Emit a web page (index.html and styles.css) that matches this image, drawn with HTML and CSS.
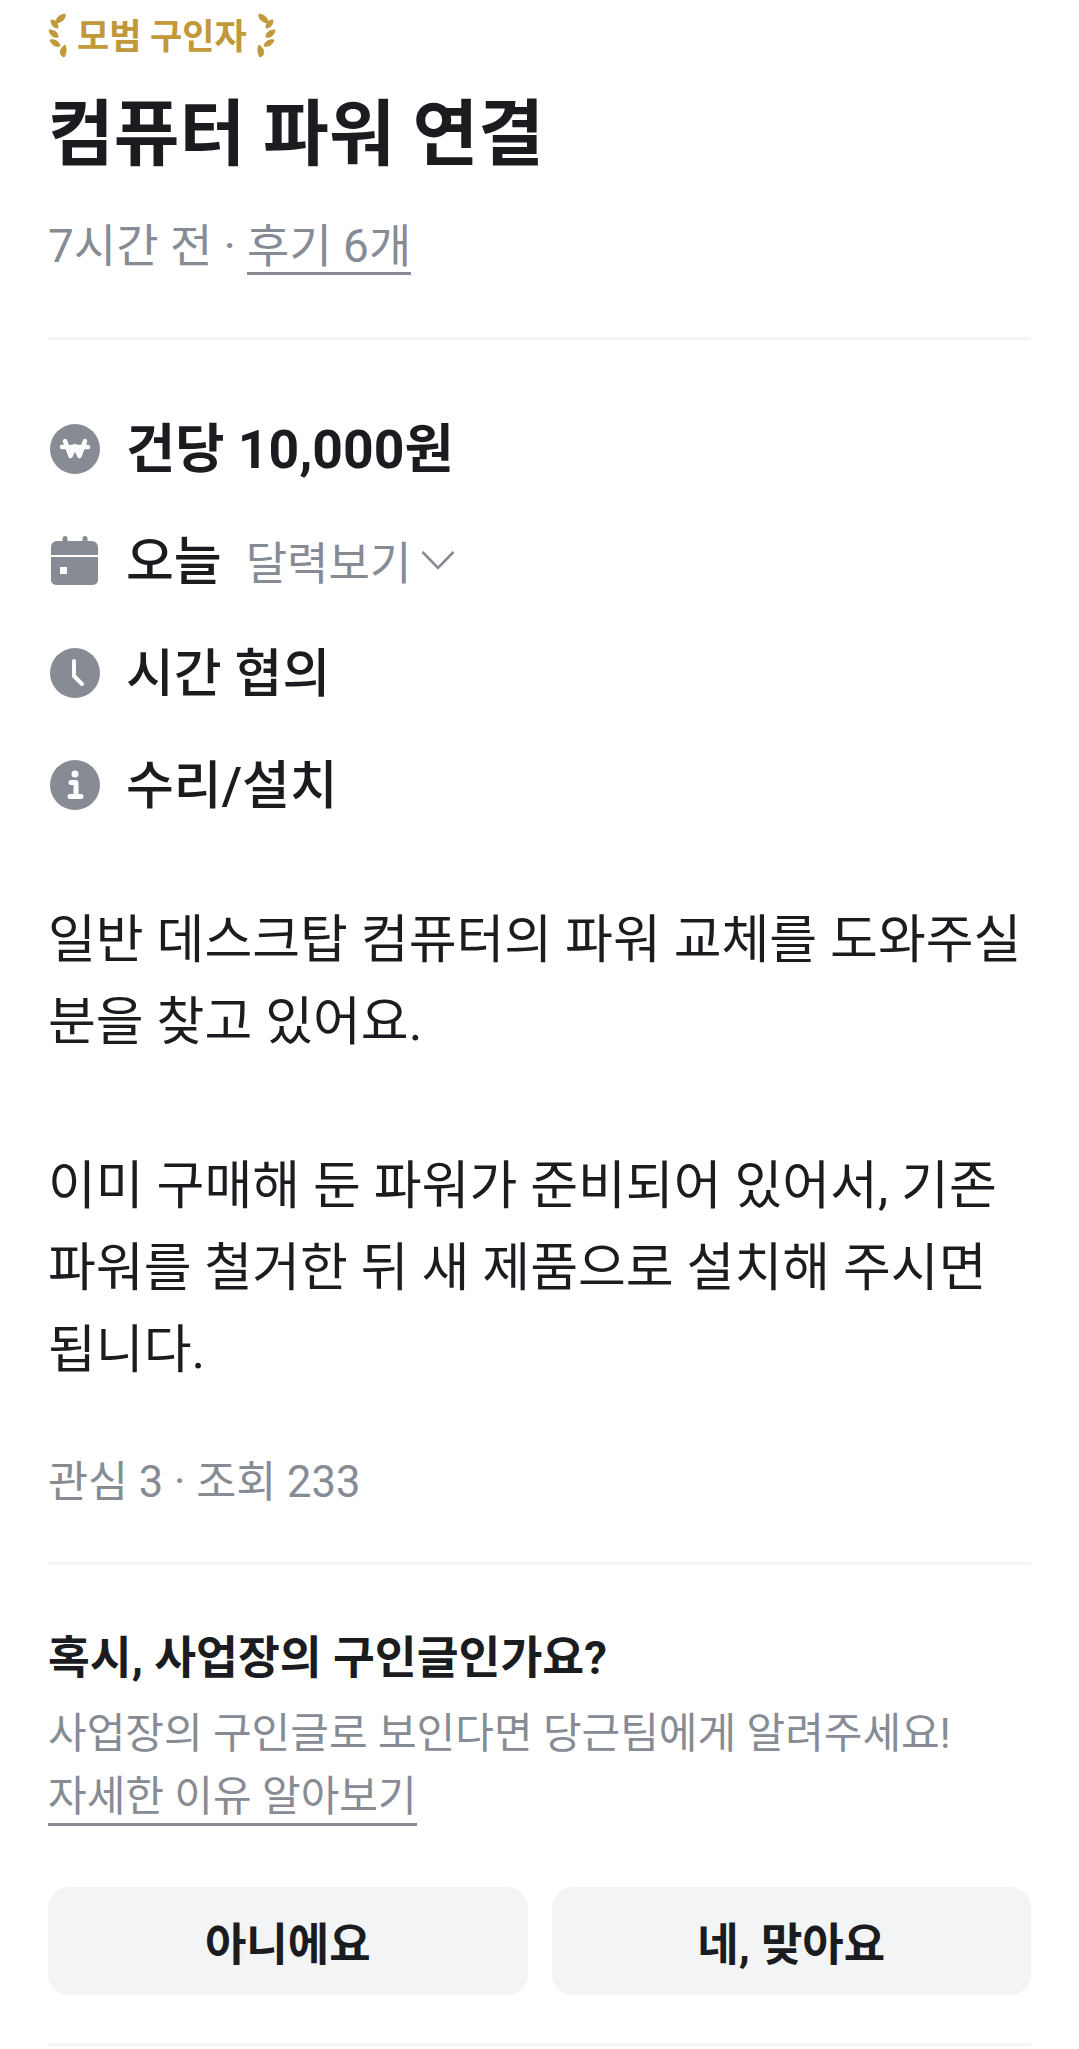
FILE: index.html
```html
<!DOCTYPE html>
<html lang="ko">
<head>
<meta charset="utf-8">
<title>컴퓨터 파워 연결</title>
<link rel="stylesheet" href="styles.css">
</head>
<body>
<main class="page">
  <header class="head">
    <div class="badge">
      <svg class="laurel" viewBox="0 0 20 45"><g fill="#c1983a" stroke="#c1983a" stroke-width="1"><path d="M17 1C18 5 15 9 8 10 8 5 11 2 17 1z"/><path d="M3 7C8 7 10 10 10 15 5 15 3 11 3 7z"/><path d="M1 17C6 17 10 19 10 24 5 25 2 22 1 17z"/><path d="M2 27C6 26 11 28 12 33 7 34 4 32 2 27z"/><path d="M17 32C19 37 18 41 16 44 10 42 12 35 17 32z"/></g></svg>
      <span class="badge-text">모범 구인자</span>
      <svg class="laurel flip" viewBox="0 0 20 45"><g fill="#c1983a" stroke="#c1983a" stroke-width="1"><path d="M17 1C18 5 15 9 8 10 8 5 11 2 17 1z"/><path d="M3 7C8 7 10 10 10 15 5 15 3 11 3 7z"/><path d="M1 17C6 17 10 19 10 24 5 25 2 22 1 17z"/><path d="M2 27C6 26 11 28 12 33 7 34 4 32 2 27z"/><path d="M17 32C19 37 18 41 16 44 10 42 12 35 17 32z"/></g></svg>
    </div>
    <h1 class="title">컴퓨터 파워 연결</h1>
    <p class="meta">7시간 전 · <span class="link">후기 6개</span></p>
  </header>

  <ul class="facts">
    <li class="fact strong">
      <svg class="icon" viewBox="0 0 50 50"><circle cx="25" cy="25" r="25" fill="#868b94"/><path d="M12 23h26M15 17l5.500 15L25 22l4.500 10L35 17" fill="none" stroke="#fff" stroke-width="4.500" stroke-linecap="round" stroke-linejoin="round"/></svg>
      <span class="fact-text">건당 10,000원</span>
    </li>
    <li class="fact">
      <svg class="icon" viewBox="0 0 50 50"><path d="M15 0a2.500 2.500 0 0 1 2.500 2.500V5h15V2.500a2.500 2.500 0 0 1 5 0V5H42a6 6 0 0 1 6 6v8H1v-8a6 6 0 0 1 6-6h5.500V2.500A2.500 2.500 0 0 1 15 0z" fill="#868b94"/><path fill-rule="evenodd" d="M1 21h47v23a5 5 0 0 1-5 5H6a5 5 0 0 1-5-5zm9 10v7h7v-7z" fill="#868b94"/></svg>
      <span class="fact-text">오늘</span>
      <span class="cal">달력보기</span>
      <svg class="chev" viewBox="0 0 34 20"><path d="M1.500 2L17 18 32.500 2" fill="none" stroke="#868b94" stroke-width="2.600"/></svg>
    </li>
    <li class="fact">
      <svg class="icon" viewBox="0 0 50 50"><circle cx="25" cy="25" r="25" fill="#868b94"/><path d="M24 13v15l8 8" fill="none" stroke="#fff" stroke-width="4" stroke-linecap="round" stroke-linejoin="round"/></svg>
      <span class="fact-text">시간 협의</span>
    </li>
    <li class="fact">
      <svg class="icon" viewBox="0 0 50 50"><circle cx="25" cy="25" r="25" fill="#868b94"/><circle cx="25" cy="14" r="3.500" fill="#fff"/><path d="M21 22.500h5V36M20 36.500h11" fill="none" stroke="#fff" stroke-width="5" stroke-linecap="round" stroke-linejoin="round"/></svg>
      <span class="fact-text">수리/설치</span>
    </li>
  </ul>

  <section class="body">
    <p>일반 데스크탑 컴퓨터의 파워 교체를 도와주실<br>분을 찾고 있어요.</p>
    <p class="gap">이미 구매해 둔 파워가 준비되어 있어서, 기존<br>파워를 철거한 뒤 새 제품으로 설치해 주시면<br>됩니다.</p>
  </section>

  <p class="stats">관심 3 · 조회 233</p>

  <section class="check">
    <h2 class="check-title">혹시, 사업장의 구인글인가요?</h2>
    <p class="check-text first">사업장의 구인글로 보인다면 당근팀에게 알려주세요!</p>
    <p class="check-text second"><span class="link">자세한 이유 알아보기</span></p>
    <div class="actions">
      <button class="btn">아니에요</button>
      <button class="btn">네, 맞아요</button>
    </div>
  </section>
</main>
</body>
</html>
```

FILE: styles.css
```css
* { box-sizing: border-box; }
html, body { margin: 0; padding: 0; background: #fff; }
body {
  font-family: Roboto, "Noto Sans CJK KR", sans-serif;
  color: #1a1c20;
  width: 1079px;
  height: 2049px;
  overflow: hidden;
}
.page { padding: 0 48px; }
.head { border-bottom: 3px solid #f3f4f5; height: 340px; padding-top: 13px; }
.badge {
  display: flex;
  align-items: center;
  gap: 9px;
  height: 45px;
  color: #c1983a;
  font-size: 35px;
  font-weight: 700;
}
.badge-text { padding-bottom: 4px; }
.laurel { width: 20px; height: 45px; flex: none; }
.flip { transform: scaleX(-1); }
.title {
  margin: 33px 0 0;
  font-size: 71.500px;
  line-height: 88px;
  font-weight: 700;
}
.meta {
  margin: 37px 0 0;
  font-size: 46px;
  line-height: 60px;
  color: #868b94;
}
.link {
  border-bottom: 3px solid #868b94;
  display: inline-block;
  line-height: 52px;
}
.facts { list-style: none; margin: 52px 0 0; padding: 0; }
.fact {
  display: flex;
  align-items: center;
  height: 112px;
  font-size: 52px;
  font-weight: 500;
}
.fact-text { padding-bottom: 5px; }
.fact.strong { font-weight: 700; font-size: 53.500px; }
.fact.strong .fact-text { padding-bottom: 8px; }
.icon { width: 50px; height: 50px; margin: 2px 26px 0 2px; flex: none; }
.cal { margin-left: 24px; font-size: 45px; font-weight: 400; color: #868b94; }
.chev { width: 34px; height: 20px; margin-left: 10px; }
.body { margin-top: 60px; font-size: 52px; line-height: 82px; }
.body p { margin: 0; }
.body .gap { margin-top: 82px; }
.stats {
  margin: 61px 0 0;
  height: 112px;
  font-size: 43.500px;
  line-height: 60px;
  color: #868b94;
  border-bottom: 3px solid #f3f4f5;
}
.check-title {
  margin: 64px 0 0;
  font-size: 45.500px;
  line-height: 60px;
  font-weight: 700;
}
.check-text { margin: 0; font-size: 42px; line-height: 60px; color: #868b94; }
.check-text.first { margin-top: 15px; }
.check-text.second { margin-top: 3px; }
.actions {
  display: flex;
  gap: 24px;
  margin-top: 60px;
  padding-bottom: 48px;
  border-bottom: 3px solid #f3f4f5;
}
.btn {
  flex: 1;
  height: 108px;
  border: 0;
  border-radius: 21px;
  background: #f3f4f5;
  color: #1a1c20;
  font: 700 45px Roboto, "Noto Sans CJK KR", sans-serif;
}
```
